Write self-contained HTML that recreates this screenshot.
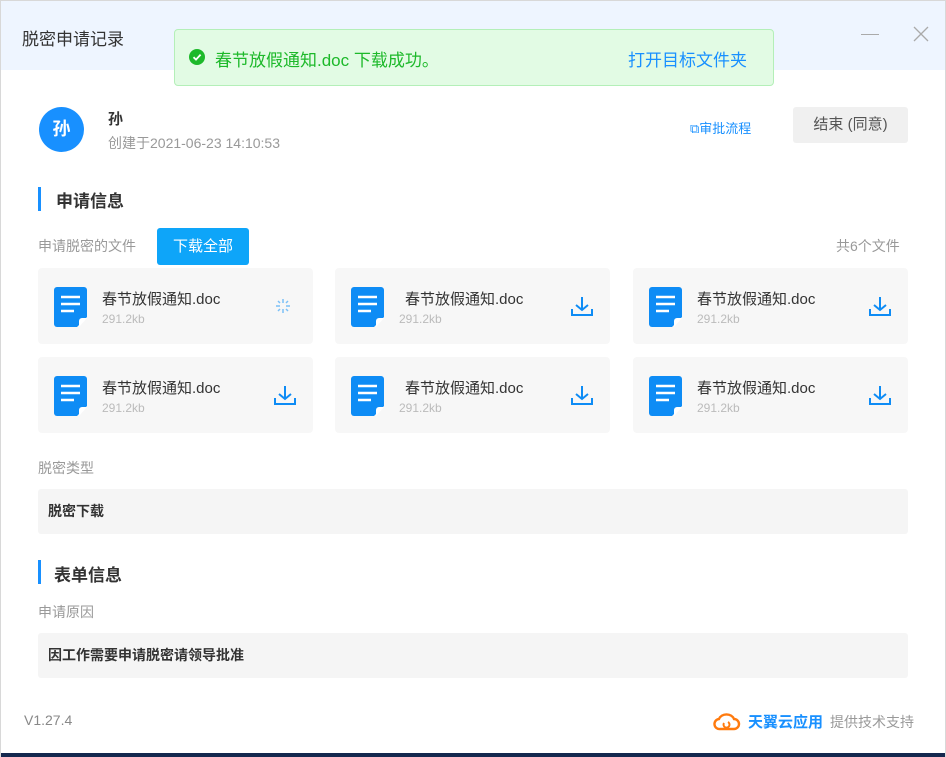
<!DOCTYPE html>
<html><head><meta charset="utf-8"><style>
*{margin:0;padding:0;box-sizing:border-box}
body{width:946px;height:757px;position:relative;background:#fff;font-family:"Liberation Sans","Noto Sans CJK SC",sans-serif;overflow:hidden}
.a{position:absolute;white-space:nowrap}
.card{position:absolute;width:275px;height:76px;background:#f7f7f7;border-radius:4px}
.card .n{position:absolute;left:64px;top:20px;font-size:15px;color:#333}
.card .s{position:absolute;left:64px;top:44px;font-size:12px;color:#bbb}
.card .ic{position:absolute;left:16px;top:19px}
.card .dl{position:absolute;left:235px;top:28px}
.box{position:absolute;left:38px;width:870px;height:45px;background:#f5f5f5;border-radius:3px;font-size:14px;color:#333;font-weight:bold;padding-left:10px;line-height:45px}
.lab{font-size:14px;color:#999}
.sec{font-size:17px;color:#333;font-weight:bold}
.bar{position:absolute;left:38px;width:3px;height:24px;background:#1890ff}
</style></head><body>
<div class="a" style="left:0;top:0;width:946px;height:757px;border:1px solid #d8d8d8"></div>
<div class="a" style="left:1px;top:1px;width:944px;height:69px;background:#eef5ff"></div>
<div class="a" style="left:22px;top:25px;font-size:17px;color:#333">脱密申请记录</div>
<div class="a" style="left:861px;top:34px;width:18px;height:1px;background:#aaa"></div>
<svg class="a" style="left:912px;top:25px" width="18" height="18"><path d="M2 2L16 16M16 2L2 16" stroke="#aaa" stroke-width="1.3"/></svg>
<div class="a" style="left:174px;top:29px;width:600px;height:57px;background:#e2fbe4;border:1px solid #b4efb8;border-radius:4px"></div>
<svg class="a" style="left:189px;top:49px" width="16" height="16"><circle cx="8" cy="8" r="8" fill="#1db92a"/><path d="M4.5 8.2L7 10.6L11.6 5.6" stroke="#fff" stroke-width="1.8" fill="none"/></svg>
<div class="a" style="left:215px;top:46px;font-size:17px;color:#1db92a">春节放假通知.doc 下载成功。</div>
<div class="a" style="left:628px;top:46px;font-size:17px;color:#1890ff">打开目标文件夹</div>
<div class="a" style="left:39px;top:107px;width:45px;height:45px;border-radius:50%;background:#1890ff;color:#fff;font-size:18px;font-weight:bold;text-align:center;line-height:45px">孙</div>
<div class="a" style="left:108px;top:108px;font-size:15px;color:#333;font-weight:bold">孙</div>
<div class="a" style="left:108px;top:133px;font-size:14px;color:#999">创建于2021-06-23 14:10:53</div>
<div class="a" style="left:690px;top:118px;font-size:13px;color:#1890ff">⧉审批流程</div>
<div class="a" style="left:793px;top:107px;width:115px;height:36px;background:#f0f0f0;border-radius:3px;font-size:15px;color:#555;text-align:center;line-height:36px">结束 (同意)</div>
<div class="bar" style="top:187px"></div>
<div class="a sec" style="left:56px;top:187px">申请信息</div>
<div class="a lab" style="left:38px;top:236px">申请脱密的文件</div>
<div class="a" style="left:157px;top:228px;width:92px;height:37px;background:#0ea5f9;border-radius:3px;color:#fff;font-size:15px;text-align:center;line-height:37px">下载全部</div>
<div class="a lab" style="left:836px;top:236px">共6个文件</div>

<div class="card" style="left:38px;top:268px"><svg class="ic" width="33" height="40"><path d="M3 0H30A3 3 0 0 1 33 3V30L23 40H3A3 3 0 0 1 0 37V3A3 3 0 0 1 3 0Z" fill="#0e8cf5"/><path d="M25 40V34A3 3 0 0 1 28 31H33Z" fill="#fff"/><path d="M7 10H26M7 17H26M7 24H20" stroke="#fff" stroke-width="2.5"/></svg><div class="n">春节放假通知.doc</div><div class="s">291.2kb</div>
<svg class="a" style="left:238px;top:31px" width="14" height="14"><g stroke="#7cc0f7" stroke-width="1.5"><path d="M7 0V4M7 10V14M0 7H4M10 7H14M2 2L4 4M10 10L12 12M12 2L10 4M4 10L2 12"/></g></svg></div>
<div class="card" style="left:335px;top:268px"><svg class="ic" width="33" height="40"><path d="M3 0H30A3 3 0 0 1 33 3V30L23 40H3A3 3 0 0 1 0 37V3A3 3 0 0 1 3 0Z" fill="#0e8cf5"/><path d="M25 40V34A3 3 0 0 1 28 31H33Z" fill="#fff"/><path d="M7 10H26M7 17H26M7 24H20" stroke="#fff" stroke-width="2.5"/></svg><div class="n" style="left:70px">春节放假通知.doc</div><div class="s">291.2kb</div><svg class="dl" width="24" height="22"><path d="M12 1V14M6 9L12 14L18 9M2 13V19H22V13" stroke="#0e8cf5" stroke-width="2" fill="none"/></svg></div>
<div class="card" style="left:633px;top:268px"><svg class="ic" width="33" height="40"><path d="M3 0H30A3 3 0 0 1 33 3V30L23 40H3A3 3 0 0 1 0 37V3A3 3 0 0 1 3 0Z" fill="#0e8cf5"/><path d="M25 40V34A3 3 0 0 1 28 31H33Z" fill="#fff"/><path d="M7 10H26M7 17H26M7 24H20" stroke="#fff" stroke-width="2.5"/></svg><div class="n">春节放假通知.doc</div><div class="s">291.2kb</div><svg class="dl" width="24" height="22"><path d="M12 1V14M6 9L12 14L18 9M2 13V19H22V13" stroke="#0e8cf5" stroke-width="2" fill="none"/></svg></div>
<div class="card" style="left:38px;top:357px"><svg class="ic" width="33" height="40"><path d="M3 0H30A3 3 0 0 1 33 3V30L23 40H3A3 3 0 0 1 0 37V3A3 3 0 0 1 3 0Z" fill="#0e8cf5"/><path d="M25 40V34A3 3 0 0 1 28 31H33Z" fill="#fff"/><path d="M7 10H26M7 17H26M7 24H20" stroke="#fff" stroke-width="2.5"/></svg><div class="n">春节放假通知.doc</div><div class="s">291.2kb</div><svg class="dl" width="24" height="22"><path d="M12 1V14M6 9L12 14L18 9M2 13V19H22V13" stroke="#0e8cf5" stroke-width="2" fill="none"/></svg></div>
<div class="card" style="left:335px;top:357px"><svg class="ic" width="33" height="40"><path d="M3 0H30A3 3 0 0 1 33 3V30L23 40H3A3 3 0 0 1 0 37V3A3 3 0 0 1 3 0Z" fill="#0e8cf5"/><path d="M25 40V34A3 3 0 0 1 28 31H33Z" fill="#fff"/><path d="M7 10H26M7 17H26M7 24H20" stroke="#fff" stroke-width="2.5"/></svg><div class="n" style="left:70px">春节放假通知.doc</div><div class="s">291.2kb</div><svg class="dl" width="24" height="22"><path d="M12 1V14M6 9L12 14L18 9M2 13V19H22V13" stroke="#0e8cf5" stroke-width="2" fill="none"/></svg></div>
<div class="card" style="left:633px;top:357px"><svg class="ic" width="33" height="40"><path d="M3 0H30A3 3 0 0 1 33 3V30L23 40H3A3 3 0 0 1 0 37V3A3 3 0 0 1 3 0Z" fill="#0e8cf5"/><path d="M25 40V34A3 3 0 0 1 28 31H33Z" fill="#fff"/><path d="M7 10H26M7 17H26M7 24H20" stroke="#fff" stroke-width="2.5"/></svg><div class="n">春节放假通知.doc</div><div class="s">291.2kb</div><svg class="dl" width="24" height="22"><path d="M12 1V14M6 9L12 14L18 9M2 13V19H22V13" stroke="#0e8cf5" stroke-width="2" fill="none"/></svg></div>

<div class="a lab" style="left:38px;top:458px">脱密类型</div>
<div class="box" style="top:489px">脱密下载</div>
<div class="bar" style="top:560px"></div>
<div class="a sec" style="left:54px;top:561px">表单信息</div>
<div class="a lab" style="left:38px;top:602px">申请原因</div>
<div class="box" style="top:633px">因工作需要申请脱密请领导批准</div>

<div class="a" style="left:24px;top:712px;font-size:14px;color:#888">V1.27.4</div>
<svg class="a" style="left:712px;top:710px" width="30" height="22"><path d="M8 19H22A5 5 0 0 0 22 9A8 7 0 0 0 7 9A5 5 0 0 0 8 19Z" stroke="#ff7a0e" stroke-width="2.4" fill="none"/><path d="M12 13A3 3 0 1 0 16 12" stroke="#ff7a0e" stroke-width="2" fill="none"/></svg>
<div class="a" style="left:748px;top:711px;font-size:15px;color:#1890ff;font-weight:bold">天翼云应用</div>
<div class="a" style="left:830px;top:712px;font-size:14px;color:#999">提供技术支持</div>
<div class="a" style="left:1px;top:753px;width:944px;height:4px;background:#14284e"></div>
</body></html>
